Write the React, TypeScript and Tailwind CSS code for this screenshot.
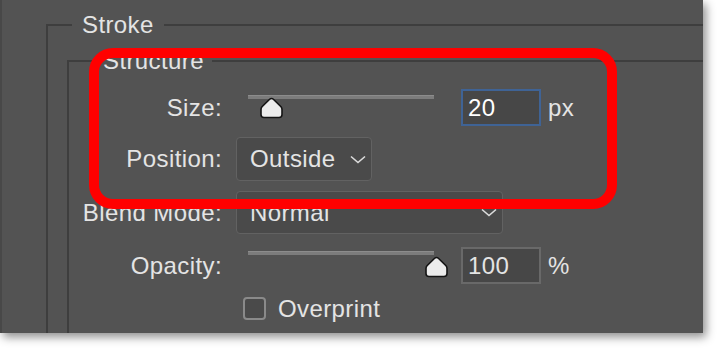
function Thumb() {
  return (
    <svg width="25" height="22" viewBox="0 0 25 22">
      <path
        d="M12.5 1.5 Q13.6 1.5 14.6 2.5 L22 9.8 Q23 10.9 23 12.4 V17.5 Q23 20.5 20 20.5 H5 Q2 20.5 2 17.5 V12.4 Q2 10.9 3 9.8 L10.4 2.5 Q11.4 1.5 12.5 1.5 Z"
        fill="#ececec"
        stroke="#141414"
        strokeWidth="1.6"
      />
    </svg>
  );
}

function Chevron() {
  return (
    <svg width="16" height="9" viewBox="0 0 16 9">
      <path d="M1 1.5 L8 7.5 L15 1.5" fill="none" stroke="#dcdcdc" strokeWidth="1.6" />
    </svg>
  );
}

function Slider({ pos }: { pos: number }) {
  return (
    <div className="relative w-[186px] h-full">
      <div className="absolute left-0 right-0 top-[6px] h-[4px] bg-[#7c7c7c] border-t border-[#8c8c8c]" />
      <div className="absolute top-[8px]" style={{ left: pos }}>
        <Thumb />
      </div>
    </div>
  );
}

function Label({ children }: { children: React.ReactNode }) {
  return <div className="w-[154px] text-right pr-[1px]">{children}</div>;
}

export default function App() {
  return (
    <div
      className="w-[718px] h-[352px] bg-white text-[#e4e4e4] text-[24px] tracking-[0.4px] leading-[26px]"
      style={{ fontFamily: '"Liberation Sans", Arial, sans-serif' }}
    >
      <div className="relative w-[703px] h-[333px] bg-[#535353] overflow-hidden border-l-2 border-[#484848] shadow-[3px_4px_9px_rgba(0,0,0,0.45)]">
        <fieldset className="ml-[44px] mt-[12px] h-[330px] border-t-2 border-l-2 border-[#3e3e3e]">
          <legend className="ml-[24px] px-[10px]">Stroke</legend>

          <fieldset className="ml-[19px] mt-[10px] h-[300px] border-t-2 border-l-2 border-[#3e3e3e]">
            <legend className="ml-[26px] px-[8px]">Structure</legend>

            <div className="flex flex-col">
              <div className="flex items-center h-[37px] mt-[15px]">
                <Label>Size:</Label>
                <div className="flex h-full ml-[13px] pl-[12px]">
                  <Slider pos={11} />
                  <div className="ml-[27px] w-[80px] h-[37px] bg-[#474747] border-2 border-[#3f6395] pl-[5px] flex items-center text-white">
                    20
                  </div>
                  <div className="ml-[7px] self-center">px</div>
                </div>
              </div>

              <div className="flex items-center h-[44px] mt-[11px]">
                <Label>Position:</Label>
                <div className="ml-[13px] w-[136px] h-[44px] bg-[#4a4a4a] border border-[#626262] rounded-[4px] pl-[13px] pr-[5px] flex items-center justify-between">
                  <span>Outside</span>
                  <Chevron />
                </div>
              </div>

              <div className="flex items-center h-[43px] mt-[10px]">
                <Label>Blend Mode:</Label>
                <div className="ml-[13px] w-[267px] h-[43px] bg-[#4a4a4a] border border-[#626262] rounded-[4px] pl-[13px] pr-[5px] flex items-center justify-between">
                  <span>Normal</span>
                  <Chevron />
                </div>
              </div>

              <div className="flex items-center h-[37px] mt-[13px]">
                <Label>Opacity:</Label>
                <div className="flex h-full ml-[13px] pl-[12px]">
                  <div className="relative w-[186px] h-full">
                    <div className="absolute left-0 right-0 top-[4px] h-[4px] bg-[#7c7c7c] border-t border-[#8c8c8c]" />
                    <div className="absolute top-[9px] left-[176px]">
                      <Thumb />
                    </div>
                  </div>
                  <div className="ml-[27px] w-[80px] h-[37px] bg-[#474747] border-2 border-[#696969] pl-[5px] flex items-center">
                    100
                  </div>
                  <div className="ml-[7px] self-center">%</div>
                </div>
              </div>

              <div className="flex items-center h-[23px] mt-[13px] ml-[174px]">
                <div className="w-[23px] h-[23px] rounded-[4px] border-2 border-[#8a8a8a] bg-[#4a4a4a]" />
                <span className="ml-[12px]">Overprint</span>
              </div>
            </div>
          </fieldset>
        </fieldset>

        <div className="absolute left-[87px] top-[48px] w-[528px] h-[161px] border-[10px] border-[#ff0000] rounded-[24px] blur-[0.6px]" />
      </div>
    </div>
  );
}
